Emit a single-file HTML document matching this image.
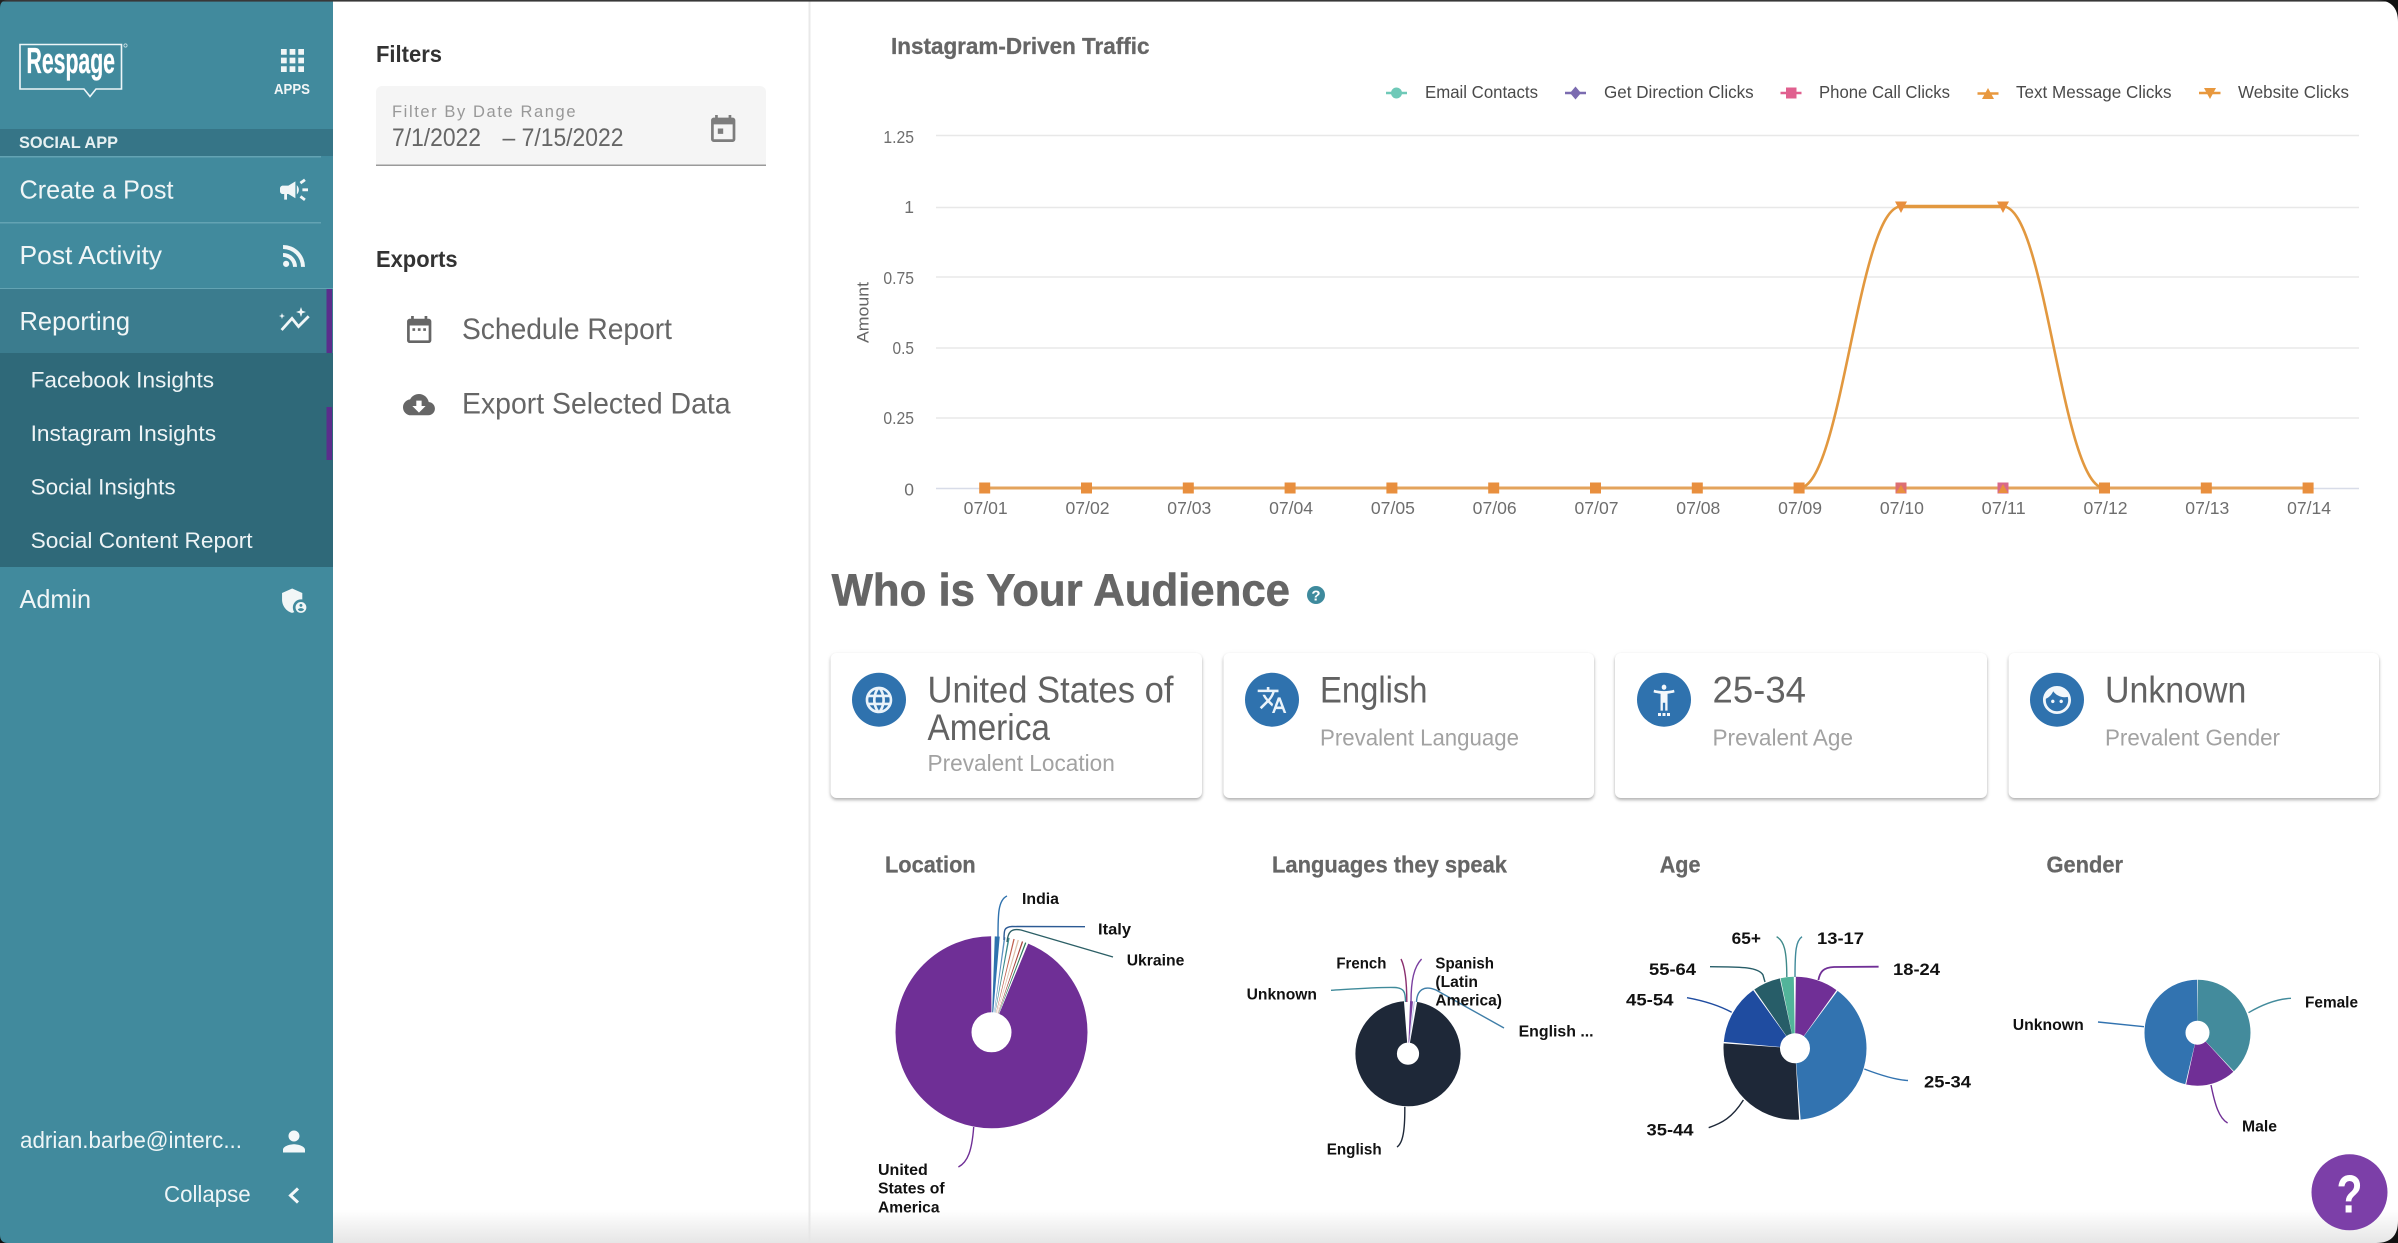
<!DOCTYPE html>
<html lang="en">
<head>
<meta charset="utf-8">
<title>Respage Social App - Instagram Insights</title>
<style>
html,body{margin:0;padding:0;background:#fff;width:2398px;height:1243px;overflow:hidden}
svg{display:block}
text{font-family:"Liberation Sans",Arial,sans-serif}
.nav{font-size:26px;fill:#f1f6f7}
.sub{font-size:22px;fill:#eef4f6}
.head{font-size:23px;font-weight:700;fill:#333}
.act{font-size:29.5px;fill:#666}
.ct{font-size:23.5px;font-weight:700;fill:#666;stroke:#666;stroke-width:.25}
.leg{font-size:17.5px;fill:#4a4a4a}
.ax{font-size:17.5px;fill:#6e6e6e}
.big{font-size:37.5px;fill:#626262}
.small{font-size:23.5px;fill:#a2a2a2}
.pl{font-size:16px;font-weight:700;fill:#111}
.ld{fill:none;stroke-width:1.4}
.g{stroke:#e8e8e8;stroke-width:1.5}
.m{fill:#e88f3e}
</style>
</head>
<body>
<svg xmlns="http://www.w3.org/2000/svg" width="2398" height="1243" viewBox="0 0 2398 1243">
<rect width="2398" height="1243" fill="#fff"/>

<!-- Sidebar -->
<rect width="333" height="1243" fill="#418a9d"/>
<rect y="129" width="333" height="27" fill="#367587"/>
<rect y="156" width="321" height="1.5" fill="#63a3b3"/>
<rect y="222" width="321" height="1.5" fill="#63a3b3"/>
<rect y="288" width="333" height="1.5" fill="#63a3b3"/>
<rect y="289" width="333" height="64" fill="#3b7c8e"/>
<rect x="326.5" y="289" width="5.5" height="64" fill="#5b2d8c"/>
<rect y="353" width="333" height="214" fill="#2f6979"/>
<rect x="326.5" y="407" width="5.5" height="53" fill="#5b2d8c"/>

<!-- Logo -->
<path d="M20 44.5H121.5V89H96L90 96.5L84 89H20Z" fill="none" stroke="#eef6f8" stroke-width="1.6"/>
<circle cx="125.5" cy="45.5" r="1.6" fill="none" stroke="#dfecef" stroke-width=".7"/>
<text x="26.5" y="73" font-size="36" font-weight="700" fill="#fff" stroke="#fff" stroke-width=".3" textLength="88.5" lengthAdjust="spacingAndGlyphs">Respage</text>
<path transform="translate(275.2 43.2) scale(1.44)" fill="#f1f6f7" d="M4 8h4V4H4v4zm6 12h4v-4h-4v4zm-6 0h4v-4H4v4zm0-6h4v-4H4v4zm6 0h4v-4h-4v4zm6-10v4h4V4h-4zm-6 4h4V4h-4v4zm6 6h4v-4h-4v4zm0 6h4v-4h-4v4z"/>
<text x="274" y="94" font-size="15" font-weight="700" fill="#f1f6f7" textLength="36" lengthAdjust="spacingAndGlyphs">APPS</text>
<text x="19" y="148" font-size="16.5" font-weight="700" fill="#e6f0f2" textLength="99" lengthAdjust="spacingAndGlyphs">SOCIAL APP</text>

<text class="nav" x="19.5" y="198.5" textLength="154" lengthAdjust="spacingAndGlyphs">Create a Post</text>
<path transform="translate(277.2 173) scale(1.4)" fill="#f1f6f7" d="M18 11v2h4v-2h-4zm-2 6.61c.96.71 2.21 1.65 3.2 2.39.4-.53.8-1.07 1.2-1.6-.99-.74-2.24-1.68-3.2-2.4-.4.54-.8 1.08-1.2 1.61zM20.4 5.6c-.4-.53-.8-1.07-1.2-1.6-.99.74-2.24 1.68-3.2 2.4.4.53.8 1.07 1.2 1.6.96-.72 2.21-1.65 3.2-2.4zM4 9c-1.1 0-2 .9-2 2v2c0 1.1.9 2 2 2h1v4h2v-4h1l5 3V6L8 9H4zm11.5 3c0-1.33-.58-2.53-1.5-3.35v6.69c.92-.81 1.5-2.01 1.5-3.34z"/>
<text class="nav" x="19.5" y="264" textLength="142.5" lengthAdjust="spacingAndGlyphs">Post Activity</text>
<path transform="translate(277.4 238.7) scale(1.41)" fill="#f1f6f7" d="M6.18 15.64a2.18 2.18 0 0 1 2.18 2.18C8.36 19 7.38 20 6.18 20C5 20 4 19 4 17.82a2.18 2.18 0 0 1 2.18-2.18M4 4.44A15.56 15.56 0 0 1 19.56 20h-2.83A12.73 12.73 0 0 0 4 7.27V4.44m0 5.66a9.9 9.9 0 0 1 9.9 9.9h-2.83A7.07 7.07 0 0 0 4 12.93V10.1z"/>
<text class="nav" x="19.5" y="330" textLength="110.5" lengthAdjust="spacingAndGlyphs">Reporting</text>
<path d="M281.6 330L292 318.4L298.5 326.5L308.7 316.3" fill="none" stroke="#f1f6f7" stroke-width="2.8"/>
<path d="M301 307l1.3 3.7 3.7 1.3-3.7 1.3-1.3 3.7-1.3-3.7-3.7-1.3 3.7-1.3zM282 313l.8 2.2 2.2.8-2.2.8-.8 2.2-.8-2.2-2.2-.8 2.2-.8z" fill="#f1f6f7"/>
<text class="sub" x="30.6" y="387.5" textLength="183.5" lengthAdjust="spacingAndGlyphs">Facebook Insights</text>
<text class="sub" x="30.6" y="441" textLength="185.5" lengthAdjust="spacingAndGlyphs">Instagram Insights</text>
<text class="sub" x="30.6" y="494.5" textLength="145" lengthAdjust="spacingAndGlyphs">Social Insights</text>
<text class="sub" x="30.6" y="548" textLength="222" lengthAdjust="spacingAndGlyphs">Social Content Report</text>
<text class="nav" x="19.5" y="608" textLength="71.5" lengthAdjust="spacingAndGlyphs">Admin</text>
<g transform="translate(278 584.5) scale(1.35)" fill="#f1f6f7">
<path d="M17 11c.34 0 .67.04 1 .09V6.27L10.5 3 3 6.27v4.91c0 4.54 3.2 8.79 7.5 9.82.55-.13 1.08-.32 1.6-.55-.69-.98-1.1-2.17-1.1-3.45 0-3.31 2.69-6 6-6z"/>
<path d="M17 13c-2.21 0-4 1.79-4 4s1.79 4 4 4 4-1.79 4-4-1.79-4-4-4zm0 1.38c.62 0 1.12.51 1.12 1.12s-.51 1.12-1.12 1.12-1.12-.51-1.12-1.12.5-1.12 1.12-1.12zm0 5.37c-.93 0-1.74-.46-2.24-1.17.05-.72 1.51-1.08 2.24-1.08s2.19.36 2.24 1.08c-.5.71-1.31 1.17-2.24 1.17z"/>
</g>
<text x="20" y="1148" font-size="23" fill="#eef5f7" textLength="222" lengthAdjust="spacingAndGlyphs">adrian.barbe@interc...</text>
<path transform="translate(277.5 1125) scale(1.375)" fill="#f4f8f9" d="M12 12c2.21 0 4-1.79 4-4s-1.79-4-4-4-4 1.79-4 4 1.79 4 4 4zm0 2c-2.67 0-8 1.34-8 4v2h16v-2c0-2.66-5.33-4-8-4z"/>
<text x="164" y="1202" font-size="23" fill="#eef5f7" textLength="86.7" lengthAdjust="spacingAndGlyphs">Collapse</text>
<path d="M298 1188.5L290.5 1195.5L298 1202.5" fill="none" stroke="#f4f8f9" stroke-width="3"/>

<!-- Filter panel -->
<rect x="808.5" y="0" width="2" height="1243" fill="#e9e9e9"/>
<text class="head" x="376" y="62" textLength="66" lengthAdjust="spacingAndGlyphs">Filters</text>
<path d="M376 165V92a6 6 0 0 1 6-6H760a6 6 0 0 1 6 6V165Z" fill="#f5f5f5"/>
<rect x="376" y="164.5" width="390" height="1.5" fill="#9a9a9a"/>
<text x="392" y="117" font-size="16.5" fill="#989898" textLength="183.5" lengthAdjust="spacing">Filter By Date Range</text>
<text x="392" y="146" font-size="25" fill="#666" textLength="89" lengthAdjust="spacingAndGlyphs">7/1/2022</text>
<text x="502.5" y="146" font-size="25" fill="#666" textLength="121" lengthAdjust="spacingAndGlyphs">– 7/15/2022</text>
<path transform="translate(707 113.6) scale(1.35 1.35)" fill="#7d7d7d" d="M16 1v2H8V1H6v2H5c-1.11 0-1.99.9-1.99 2L3 19c0 1.1.89 2 2 2h14c1.1 0 2-.9 2-2V5c0-1.1-.9-2-2-2h-1V1h-2zm3 18H5V8h14v11zM8 11h4v4H8z"/>
<text class="head" x="376" y="267" textLength="81.6" lengthAdjust="spacingAndGlyphs">Exports</text>
<path transform="translate(403 314.7) scale(1.35)" fill="#666" d="M16 1v2H8V1H6v2H5c-1.11 0-1.99.9-1.99 2L3 19c0 1.1.89 2 2 2h14c1.1 0 2-.9 2-2V5c0-1.1-.9-2-2-2h-1V1h-2zm3 18H5V8h14v11zM7 10h2v2H7zM11 10h2v2h-2zM15 10h2v2h-2z"/>
<text class="act" x="462" y="339" textLength="210" lengthAdjust="spacingAndGlyphs">Schedule Report</text>
<path transform="translate(403 388.7) scale(1.33)" fill="#666" d="M19.35 10.04C18.67 6.59 15.64 4 12 4 9.11 4 6.6 5.64 5.35 8.04 2.34 8.36 0 10.91 0 14c0 3.31 2.69 6 6 6h13c2.76 0 5-2.24 5-5 0-2.64-2.05-4.78-4.65-4.96zM17 13l-5 5-5-5h3V9h4v4h3z"/>
<text class="act" x="462" y="413.5" textLength="268.6" lengthAdjust="spacingAndGlyphs">Export Selected Data</text>

<!-- Line chart -->
<text x="891" y="54" font-size="23.5" font-weight="700" fill="#666" stroke="#666" stroke-width=".3" textLength="258.5" lengthAdjust="spacingAndGlyphs">Instagram-Driven Traffic</text>
<g>
<path d="M1386 93H1407" stroke="#6fc9b8" stroke-width="2.5"/><circle cx="1396.5" cy="93" r="5.5" fill="#6fc9b8"/>
<text class="leg" x="1425" y="98" textLength="113" lengthAdjust="spacingAndGlyphs">Email Contacts</text>
<path d="M1565 93H1586" stroke="#7b6bb0" stroke-width="2.5"/><path d="M1575.5 86.5L1581 93L1575.5 99.5L1570 93Z" fill="#7b6bb0"/>
<text class="leg" x="1604" y="98" textLength="149.7" lengthAdjust="spacingAndGlyphs">Get Direction Clicks</text>
<path d="M1780.5 93H1801.5" stroke="#e0608f" stroke-width="2.5"/><rect x="1786" y="87.5" width="10.5" height="11" fill="#e0608f"/>
<text class="leg" x="1819" y="98" textLength="131" lengthAdjust="spacingAndGlyphs">Phone Call Clicks</text>
<path d="M1977.5 93.5H1998.5" stroke="#e8983e" stroke-width="2.5"/><path d="M1988 88L1994 99H1982Z" fill="#e8983e"/>
<text class="leg" x="2016" y="98" textLength="155.5" lengthAdjust="spacingAndGlyphs">Text Message Clicks</text>
<path d="M2199 93H2220.5" stroke="#e8983e" stroke-width="2.5"/><path d="M2204 88H2216L2210 99Z" fill="#e8983e"/>
<text class="leg" x="2238" y="98" textLength="111" lengthAdjust="spacingAndGlyphs">Website Clicks</text>
</g>
<path class="g" d="M936 135.5H2359M936 207.5H2359M936 277H2359M936 348H2359M936 418H2359"/>
<path d="M936 488.5H2359" stroke="#d8dce8" stroke-width="1.5"/>
<g class="ax" text-anchor="end">
<text x="914" y="143" textLength="30.6" lengthAdjust="spacingAndGlyphs">1.25</text>
<text x="914" y="213">1</text>
<text x="914" y="284" textLength="30.6" lengthAdjust="spacingAndGlyphs">0.75</text>
<text x="914" y="354" textLength="21.5" lengthAdjust="spacingAndGlyphs">0.5</text>
<text x="914" y="424" textLength="30.6" lengthAdjust="spacingAndGlyphs">0.25</text>
<text x="914" y="495.5">0</text>
</g>
<text transform="translate(868.5 343) rotate(-90)" font-size="16.5" fill="#666" textLength="61" lengthAdjust="spacingAndGlyphs">Amount</text>
<path d="M984 488H2308" stroke="#e3a35c" stroke-width="3"/>
<path d="M1799 488C1842 488 1858 206.5 1901 206.5L2003 206.5C2046 206.5 2061.5 488 2104.5 488" fill="none" stroke="#e2983f" stroke-width="2.6"/>
<path d="M1901 206.5H2003" stroke="#e2983f" stroke-width="3.5"/>
<path class="m" d="M1895 201.5H1907L1901 213ZM1997 201.5H2009L2003 213Z"/>
<rect x="1895.5" y="482.5" width="11" height="11" fill="#dd6f72"/>
<rect x="1997.5" y="482.5" width="11" height="11" fill="#d9688a"/>
<path class="m" d="M1901 485L1906 493H1896ZM2003 484L2008 493H1998Z"/>
<g class="m">
<rect x="979.2" y="482.5" width="11" height="11"/><rect x="1081" y="482.5" width="11" height="11"/><rect x="1182.8" y="482.5" width="11" height="11"/><rect x="1284.6" y="482.5" width="11" height="11"/><rect x="1386.4" y="482.5" width="11" height="11"/><rect x="1488.2" y="482.5" width="11" height="11"/><rect x="1590" y="482.5" width="11" height="11"/><rect x="1691.8" y="482.5" width="11" height="11"/><rect x="1793.6" y="482.5" width="11" height="11"/><rect x="2099" y="482.5" width="11" height="11"/><rect x="2200.8" y="482.5" width="11" height="11"/><rect x="2302.6" y="482.5" width="11" height="11"/>
</g>
<g class="ax" text-anchor="middle">
<text x="985.7" y="514" textLength="44" lengthAdjust="spacingAndGlyphs">07/01</text>
<text x="1087.5" y="514" textLength="44" lengthAdjust="spacingAndGlyphs">07/02</text>
<text x="1189.3" y="514" textLength="44" lengthAdjust="spacingAndGlyphs">07/03</text>
<text x="1291.1" y="514" textLength="44" lengthAdjust="spacingAndGlyphs">07/04</text>
<text x="1392.9" y="514" textLength="44" lengthAdjust="spacingAndGlyphs">07/05</text>
<text x="1494.7" y="514" textLength="44" lengthAdjust="spacingAndGlyphs">07/06</text>
<text x="1596.5" y="514" textLength="44" lengthAdjust="spacingAndGlyphs">07/07</text>
<text x="1698.3" y="514" textLength="44" lengthAdjust="spacingAndGlyphs">07/08</text>
<text x="1800.1" y="514" textLength="44" lengthAdjust="spacingAndGlyphs">07/09</text>
<text x="1901.9" y="514" textLength="44" lengthAdjust="spacingAndGlyphs">07/10</text>
<text x="2003.7" y="514" textLength="44" lengthAdjust="spacingAndGlyphs">07/11</text>
<text x="2105.5" y="514" textLength="44" lengthAdjust="spacingAndGlyphs">07/12</text>
<text x="2207.3" y="514" textLength="44" lengthAdjust="spacingAndGlyphs">07/13</text>
<text x="2309.1" y="514" textLength="44" lengthAdjust="spacingAndGlyphs">07/14</text>
</g>

<!-- Audience -->
<text x="831.6" y="605.7" font-size="45" font-weight="700" fill="#666" stroke="#666" stroke-width=".6" textLength="458.4" lengthAdjust="spacingAndGlyphs">Who is Your Audience</text>
<circle cx="1316" cy="595" r="9" fill="#3e8a9d"/>
<text x="1316" y="600.5" font-size="15" font-weight="700" fill="#fff" text-anchor="middle">?</text>

<g style="filter:drop-shadow(0 2px 1.5px rgba(0,0,0,.3)) drop-shadow(0 0 2px rgba(0,0,0,.03))" fill="#fff">
<rect x="830.6" y="653" width="371.4" height="145" rx="6"/>
<rect x="1223.5" y="653" width="370.5" height="145" rx="6"/>
<rect x="1615" y="653" width="372" height="145" rx="6"/>
<rect x="2008.6" y="653" width="370.4" height="145" rx="6"/>
</g>
<g fill="#2f72ae">
<circle cx="879" cy="699.7" r="27"/><circle cx="1272" cy="699.7" r="27"/><circle cx="1664" cy="699.7" r="27"/><circle cx="2057" cy="699.7" r="27"/>
</g>
<path transform="translate(863 684) scale(1.33)" fill="#eaf3fa" d="M11.99 2C6.47 2 2 6.48 2 12s4.47 10 9.99 10C17.52 22 22 17.52 22 12S17.52 2 11.99 2zm6.93 6h-2.95c-.32-1.25-.78-2.45-1.38-3.56 1.84.63 3.37 1.91 4.33 3.56zM12 4.04c.83 1.2 1.48 2.53 1.91 3.96h-3.82c.43-1.43 1.08-2.76 1.91-3.96zM4.26 14C4.1 13.36 4 12.69 4 12s.1-1.36.26-2h3.38c-.08.66-.14 1.32-.14 2 0 .68.06 1.34.14 2H4.26zm.82 2h2.95c.32 1.25.78 2.45 1.38 3.56-1.84-.63-3.37-1.9-4.33-3.56zm2.95-8H5.08c.96-1.66 2.49-2.93 4.33-3.56C8.81 5.55 8.35 6.75 8.03 8zM12 19.96c-.83-1.2-1.48-2.53-1.91-3.96h3.82c-.43 1.43-1.08 2.76-1.91 3.96zM14.34 14H9.66c-.09-.66-.16-1.32-.16-2 0-.68.07-1.35.16-2h4.68c.09.65.16 1.32.16 2 0 .68-.07 1.34-.16 2zm.25 5.56c.6-1.11 1.06-2.31 1.38-3.56h2.95c-.96 1.65-2.49 2.93-4.33 3.56zM16.36 14c.08-.66.14-1.32.14-2 0-.68-.06-1.34-.14-2h3.38c.16.64.26 1.31.26 2s-.1 1.36-.26 2h-3.38z"/>
<path transform="translate(1256.4 684.4) scale(1.3)" fill="#eaf3fa" d="M12.87 15.07l-2.54-2.51.03-.03c1.74-1.94 2.98-4.17 3.71-6.53H17V4h-7V2H8v2H1v1.99h11.17C11.5 7.92 10.44 9.75 9 11.35 8.07 10.32 7.3 9.19 6.69 8h-2c.73 1.63 1.73 3.17 2.98 4.56l-5.09 5.02L4 19l5-5 3.11 3.11.76-2.04zM18.5 10h-2L12 22h2l1.12-3h4.75L21 22h2l-4.5-12zm-2.62 7l1.62-4.33L19.12 17h-3.24z"/>
<path transform="translate(1650 682) scale(1.17 1.3)" fill="#f2f7fb" d="M20.5 6c-2.61.7-5.67 1-8.5 1s-5.89-.3-8.5-1L3 8c1.86.5 4 .83 6 1v13h2v-6h2v6h2V9c2-.17 4.14-.5 6-1l-.5-2zM12 6c1.1 0 2-.9 2-2s-.9-2-2-2-2 .9-2 2 .9 2 2 2z"/>
<path d="M1658 713h3v3h-3zM1662.5 713h3v3h-3zM1667 713h3v3h-3z" fill="#f2f7fb"/>
<path transform="translate(2040.2 683.2) scale(1.4)" fill="#f2f7fb" d="M9 11.75c-.69 0-1.25.56-1.25 1.25s.56 1.25 1.25 1.25 1.25-.56 1.25-1.25-.56-1.25-1.25-1.25zm6 0c-.69 0-1.25.56-1.25 1.25s.56 1.25 1.25 1.25 1.25-.56 1.25-1.25-.56-1.25-1.25-1.25zM12 2C6.48 2 2 6.48 2 12s4.48 10 10 10 10-4.48 10-10S17.52 2 12 2zm0 18c-4.41 0-8-3.59-8-8 0-.29.02-.58.05-.86 2.36-1.05 4.23-2.98 5.21-5.37C11.07 8.33 14.05 10 17.42 10c.78 0 1.53-.09 2.25-.26.21.71.33 1.47.33 2.26 0 4.41-3.59 8-8 8z"/>

<text class="big" x="927.5" y="702.5" textLength="246" lengthAdjust="spacingAndGlyphs">United States of</text>
<text class="big" x="927.5" y="740" textLength="122.5" lengthAdjust="spacingAndGlyphs">America</text>
<text class="small" x="927.5" y="771" textLength="187.3" lengthAdjust="spacingAndGlyphs">Prevalent Location</text>
<text class="big" x="1320" y="702.5" textLength="107.5" lengthAdjust="spacingAndGlyphs">English</text>
<text class="small" x="1320" y="745.7" textLength="199" lengthAdjust="spacingAndGlyphs">Prevalent Language</text>
<text class="big" x="1712.5" y="702.5" textLength="93.5" lengthAdjust="spacingAndGlyphs">25-34</text>
<text class="small" x="1712.5" y="745.7" textLength="140.5" lengthAdjust="spacingAndGlyphs">Prevalent Age</text>
<text class="big" x="2105" y="702.5" textLength="141.3" lengthAdjust="spacingAndGlyphs">Unknown</text>
<text class="small" x="2105" y="745.7" textLength="175" lengthAdjust="spacingAndGlyphs">Prevalent Gender</text>

<text class="ct" x="885" y="872.7" textLength="90.7" lengthAdjust="spacingAndGlyphs">Location</text>
<text class="ct" x="1272" y="872.7" textLength="235" lengthAdjust="spacingAndGlyphs">Languages they speak</text>
<text class="ct" x="1659.7" y="872.7" textLength="40.8" lengthAdjust="spacingAndGlyphs">Age</text>
<text class="ct" x="2046.5" y="872.7" textLength="76.5" lengthAdjust="spacingAndGlyphs">Gender</text>

<!-- Pie 1: Location -->
<g fill="none" stroke-width="76" transform="rotate(-90 991.5 1032.3)">
<circle cx="991.5" cy="1032.3" r="58" stroke="#6f2f96" pathLength="360" stroke-dasharray="337.5 360" stroke-dashoffset="-22.5"/>
<circle cx="991.5" cy="1032.3" r="58" stroke="#2f72ae" pathLength="360" stroke-dasharray="3 360" stroke-dashoffset="-2"/>
<circle cx="991.5" cy="1032.3" r="58" stroke="#5b8fc0" pathLength="360" stroke-dasharray=".9 360" stroke-dashoffset="-7.5"/>
<circle cx="991.5" cy="1032.3" r="58" stroke="#3c8a8c" pathLength="360" stroke-dasharray=".9 360" stroke-dashoffset="-10"/>
<circle cx="991.5" cy="1032.3" r="58" stroke="#c0604f" pathLength="360" stroke-dasharray=".8 360" stroke-dashoffset="-13.2"/>
<circle cx="991.5" cy="1032.3" r="58" stroke="#dfc0a8" pathLength="360" stroke-dasharray=".8 360" stroke-dashoffset="-15.8"/>
<circle cx="991.5" cy="1032.3" r="58" stroke="#a8443c" pathLength="360" stroke-dasharray=".8 360" stroke-dashoffset="-18.5"/>
<circle cx="991.5" cy="1032.3" r="58" stroke="#2c7a5c" pathLength="360" stroke-dasharray=".8 360" stroke-dashoffset="-20.5"/>
</g>
<path class="ld" stroke="#2f72ae" d="M998 937C998 915 998 900 1007 896"/>
<path class="ld" stroke="#2c5a94" d="M1004 940C1004 930 1004 927 1012 926.5L1085 926.7"/>
<path class="ld" stroke="#2c5f66" d="M1007 942C1008 932 1011 928 1021 930L1113 957"/>
<path class="ld" stroke="#6f2f96" d="M973.7 1127C972 1150 968 1162 958.4 1167"/>
<text class="pl" x="1022" y="904" textLength="37" lengthAdjust="spacingAndGlyphs">India</text>
<text class="pl" x="1098" y="934.7" textLength="33" lengthAdjust="spacingAndGlyphs">Italy</text>
<text class="pl" x="1126.7" y="965.7" textLength="57.7" lengthAdjust="spacingAndGlyphs">Ukraine</text>
<text class="pl" x="878" y="1175" textLength="49.8" lengthAdjust="spacingAndGlyphs">United</text>
<text class="pl" x="878" y="1193.7" textLength="66.6" lengthAdjust="spacingAndGlyphs">States of</text>
<text class="pl" x="878" y="1212.3" textLength="61.5" lengthAdjust="spacingAndGlyphs">America</text>

<!-- Pie 2: Languages -->
<g fill="none" stroke-width="41.5" transform="rotate(-90 1408 1053.7)">
<circle cx="1408" cy="1053.7" r="31.85" stroke="#1e2838" pathLength="360" stroke-dasharray="345.5 360" stroke-dashoffset="-10"/>
<circle cx="1408" cy="1053.7" r="31.85" stroke="#7a3fa0" pathLength="360" stroke-dasharray="3.2 360" stroke-dashoffset="-2.3"/>
<circle cx="1408" cy="1053.7" r="31.85" stroke="#a8b8e0" pathLength="360" stroke-dasharray="1 360" stroke-dashoffset="-6.5"/>
</g>
<path class="ld" stroke="#3f8a9a" d="M1331 990.3C1360 988.5 1380 987 1395 987.5C1404 988 1405.5 992 1405.5 1002"/>
<path class="ld" stroke="#8a2f6f" d="M1401 959C1405 967 1406.8 980 1406.8 1002"/>
<path class="ld" stroke="#7a3fa0" d="M1421.6 959C1414 967 1411 980 1411 1002"/>
<path class="ld" stroke="#3f7ea8" d="M1504 1028L1436 990C1424 985 1417 990 1416.5 1002"/>
<path class="ld" stroke="#1e2838" d="M1404.8 1106.7C1405 1130 1403 1143 1397 1147"/>
<text class="pl" x="1336.4" y="968.3" textLength="50" lengthAdjust="spacingAndGlyphs">French</text>
<text class="pl" x="1435.4" y="968.3" textLength="58.6" lengthAdjust="spacingAndGlyphs">Spanish</text>
<text class="pl" x="1435.4" y="987" textLength="42.6" lengthAdjust="spacingAndGlyphs">(Latin</text>
<text class="pl" x="1435.4" y="1005.7" textLength="66.6" lengthAdjust="spacingAndGlyphs">America)</text>
<text class="pl" x="1246.6" y="999.3" textLength="70.4" lengthAdjust="spacingAndGlyphs">Unknown</text>
<text class="pl" x="1518.6" y="1036.7" textLength="75" lengthAdjust="spacingAndGlyphs">English ...</text>
<text class="pl" x="1326.7" y="1154.7" textLength="55" lengthAdjust="spacingAndGlyphs">English</text>

<!-- Pie 3: Age -->
<g fill="none" stroke-width="56.5" transform="rotate(-90 1795 1048.3)">
<circle cx="1795" cy="1048.3" r="43.25" stroke="#702f96" pathLength="360" stroke-dasharray="34.8 360" stroke-dashoffset="-.7"/>
<circle cx="1795" cy="1048.3" r="43.25" stroke="#3273b0" pathLength="360" stroke-dasharray="138.8 360" stroke-dashoffset="-36.6"/>
<circle cx="1795" cy="1048.3" r="43.25" stroke="#1e2838" pathLength="360" stroke-dasharray="97.4 360" stroke-dashoffset="-176.6"/>
<circle cx="1795" cy="1048.3" r="43.25" stroke="#1f4ca0" pathLength="360" stroke-dasharray="49 360" stroke-dashoffset="-275.2"/>
<circle cx="1795" cy="1048.3" r="43.25" stroke="#275d68" pathLength="360" stroke-dasharray="22.4 360" stroke-dashoffset="-325.3"/>
<circle cx="1795" cy="1048.3" r="43.25" stroke="#52b49a" pathLength="360" stroke-dasharray="10.7 360" stroke-dashoffset="-348.3"/>
</g>
<path class="ld" stroke="#3f8a8a" d="M1776.6 936.7C1784 941 1786.8 950 1786.8 977"/>
<path class="ld" stroke="#3f8a9a" d="M1802 936.7C1796 941 1795 950 1795 977"/>
<path stroke="#702f96" fill="none" stroke-width="1.8" d="M1878.6 966.7L1834 967C1823 967.5 1820 972 1818.4 980"/>
<path class="ld" stroke="#275d68" d="M1710 966.7C1735 967 1758 966 1763 975L1765 982"/>
<path class="ld" stroke="#1f4ca0" d="M1687 997.7C1705 1001 1720 1006 1731.7 1012.3"/>
<path class="ld" stroke="#3273b0" d="M1864.3 1069C1880 1075 1895 1080 1908 1080.5"/>
<path class="ld" stroke="#1e2838" d="M1743.4 1100C1732 1118 1722 1123 1708.7 1127.7"/>
<g class="pl" style="font-size:17px">
<text x="1731.7" y="944" textLength="29.3" lengthAdjust="spacingAndGlyphs">65+</text>
<text x="1817" y="944" textLength="47" lengthAdjust="spacingAndGlyphs">13-17</text>
<text x="1893" y="975" textLength="47" lengthAdjust="spacingAndGlyphs">18-24</text>
<text x="1649" y="975" textLength="47" lengthAdjust="spacingAndGlyphs">55-64</text>
<text x="1626" y="1005.7" textLength="47.5" lengthAdjust="spacingAndGlyphs">45-54</text>
<text x="1924" y="1087.7" textLength="47" lengthAdjust="spacingAndGlyphs">25-34</text>
<text x="1646.5" y="1135.7" textLength="47" lengthAdjust="spacingAndGlyphs">35-44</text>
</g>

<!-- Pie 4: Gender -->
<g fill="none" stroke-width="41" transform="rotate(-90 2197.5 1032.7)">
<circle cx="2197.5" cy="1032.7" r="32.5" stroke="#438b9c" pathLength="360" stroke-dasharray="136.2 360" stroke-dashoffset="-.4"/>
<circle cx="2197.5" cy="1032.7" r="32.5" stroke="#702f96" pathLength="360" stroke-dasharray="55 360" stroke-dashoffset="-137.4"/>
<circle cx="2197.5" cy="1032.7" r="32.5" stroke="#3273b0" pathLength="360" stroke-dasharray="166.2 360" stroke-dashoffset="-193.4"/>
</g>
<path class="ld" stroke="#438b9c" d="M2248.5 1012.7C2265 1003 2278 999 2291 998.3"/>
<path class="ld" stroke="#3273b0" d="M2098 1022L2144 1026.7"/>
<path class="ld" stroke="#702f96" d="M2211 1085C2215 1105 2219 1118 2227.6 1123"/>
<text class="pl" x="2305" y="1007.3" textLength="53" lengthAdjust="spacingAndGlyphs">Female</text>
<text class="pl" x="2012.8" y="1030" textLength="70.9" lengthAdjust="spacingAndGlyphs">Unknown</text>
<text class="pl" x="2242" y="1131.7" textLength="35" lengthAdjust="spacingAndGlyphs">Male</text>

<!-- Bottom fade -->
<defs>
<linearGradient id="fade" x1="0" y1="0" x2="0" y2="1">
<stop offset="0" stop-color="#e6e6e6" stop-opacity="0"/>
<stop offset="1" stop-color="#e6e6e6" stop-opacity="1"/>
</linearGradient>
</defs>
<rect x="333" y="1210" width="2065" height="33" fill="url(#fade)"/>

<!-- Help button -->
<circle cx="2349.5" cy="1192.3" r="38" fill="#7c3fa8"/>
<text x="2349.5" y="1212.5" font-size="54" font-weight="700" fill="#fff" text-anchor="middle" textLength="26" lengthAdjust="spacingAndGlyphs">?</text>

<!-- Window frame -->
<rect width="2398" height="1.6" fill="#383838"/>
<path d="M2398 0H2376Q2398 0 2398 22Z" fill="#111"/>
<path d="M2398 1243V1221Q2398 1243 2376 1243Z" fill="#111"/>
<path d="M0 1243V1235Q0 1243 8 1243Z" fill="#111"/>
<path d="M0 0H8Q0 0 0 8Z" fill="#222"/>
</svg>
</body>
</html>
